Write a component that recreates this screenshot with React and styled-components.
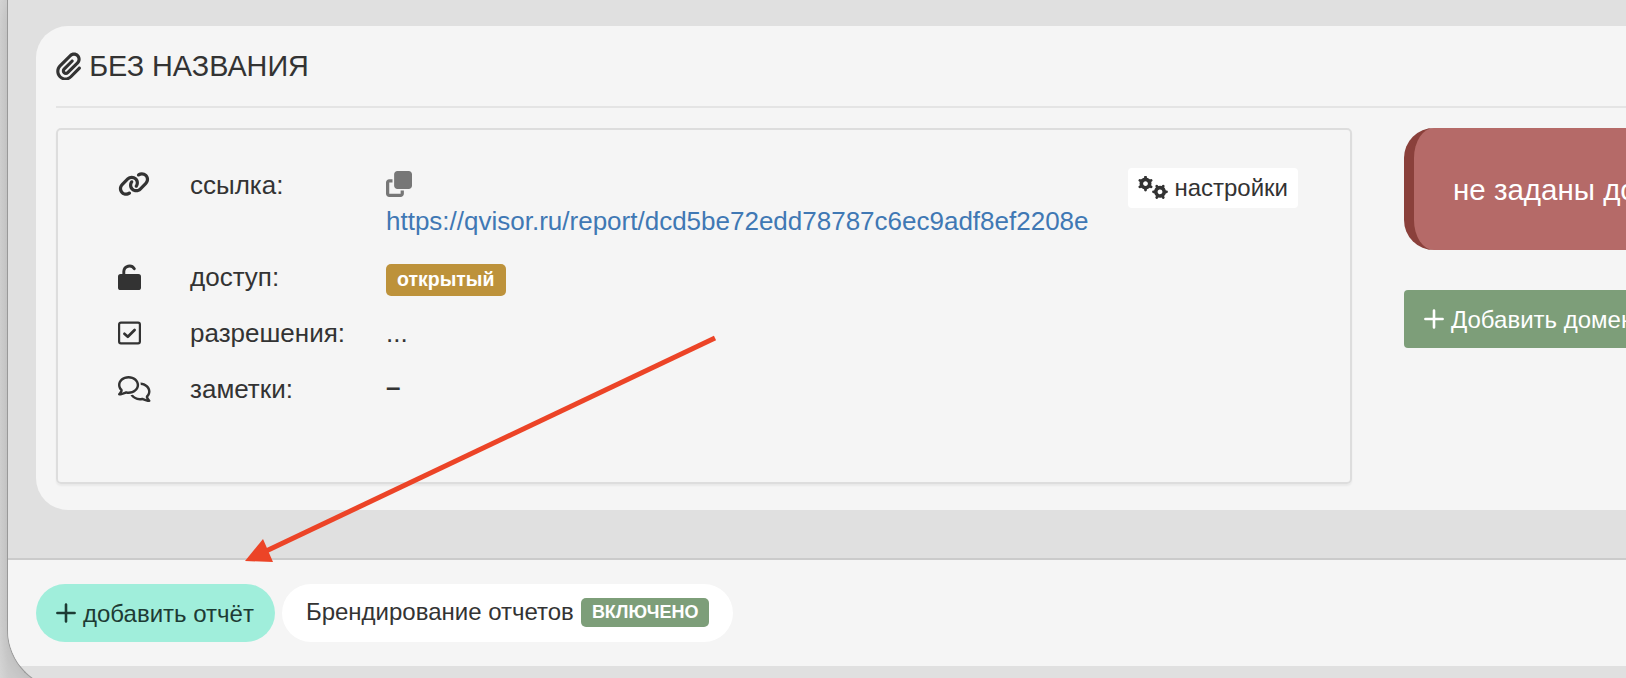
import React from "react";
import styled, { createGlobalStyle } from "styled-components";
import {
  FaPaperclip,
  FaLink,
  FaRegComments,
  FaClone,
} from "react-icons/fa6";

const GlobalStyle = createGlobalStyle`
  * {
    box-sizing: border-box;
  }

  body {
    margin: 0;
    overflow: hidden;
    font-family: "Liberation Sans", Arial, sans-serif;
    color: #333;
  }
`;

const Desktop = styled.div`
  height: 678px;
  padding-left: 7px;
  overflow: hidden;
  background: linear-gradient(to right, #d6d6d6, #cfcfcf 8px);
`;

const Window = styled.div`
  position: relative;
  display: flex;
  flex-direction: column;
  height: 690px;
  width: 1740px;
  border-left: 1px solid #999;
  border-bottom: 1px solid #999;
  border-bottom-left-radius: 60px;
  background: #e0e0e0;
  overflow: hidden;
  box-shadow: 0 4px 24px rgba(0, 0, 0, 0.12);
`;

const Content = styled.div`
  height: 558px;
  padding: 26px 0 0 28px;
`;

const Card = styled.section`
  height: 484px;
  padding: 20px;
  border-radius: 32px;
  background: #f5f5f5;
`;

/* the glyphs are not square, so the width is given next to the height */
const Icon = styled.span`
  display: inline-flex;
  flex-shrink: 0;

  svg {
    width: ${(props) => props.$w}px;
    height: ${(props) => props.$h}px;
  }
`;

const Title = styled.h1`
  display: flex;
  align-items: center;
  gap: 8px;
  height: 40px;
  margin: 0 0 20px;
  font-size: 28.8px;
  font-weight: normal;
  line-height: 40px;
`;

const Divider = styled.hr`
  height: 2px;
  margin: 0 0 20px;
  border: 0;
  background: #e4e4e4;
`;

const Columns = styled.div`
  display: flex;
  gap: 52px;
`;

const Panel = styled.div`
  display: flex;
  flex-shrink: 0;
  justify-content: space-between;
  align-items: flex-start;
  width: 1296px;
  height: 356px;
  padding: 36px 52px 0 60px;
  border: 2px solid #ddd;
  border-radius: 5px;
  box-shadow: 0 2px 2px rgba(0, 0, 0, 0.05);
`;

const Rows = styled.div`
  display: grid;
  grid-template-columns: 72px 196px auto;
  row-gap: 19px;
  font-size: 26px;
  line-height: 37px;
`;

const RowIcon = styled.div`
  display: flex;
  align-items: center;
  height: 35px;
`;

const RowLabel = styled.div`
  padding-top: ${(props) => (props.$first ? 1 : 0)}px;
`;

const Link = styled.a`
  display: block;
  color: #4078b4;
  text-decoration: none;
`;

const CopyIcon = styled(FaClone)`
  display: block;
  margin: 5px 0 6px;
  color: #777;
`;

const Dash = styled.span`
  position: relative;
  top: -2px;
  font-weight: bold;
`;

const Label = styled.span`
  display: inline-flex;
  align-items: center;
  height: ${(props) => props.$height}px;
  padding: 0 11px;
  border-radius: 5px;
  background: ${(props) => props.$bg};
  color: #fff;
  font-size: ${(props) => props.$size}px;
  font-weight: bold;
  line-height: 1;
`;

const SettingsButton = styled.button`
  display: flex;
  align-items: center;
  gap: 6px;
  height: 40px;
  margin-top: 2px;
  padding: 0 10px;
  border: 0;
  border-radius: 4px;
  background: #fff;
  color: #333;
  font: inherit;
  font-size: 24px;
`;

const Side = styled.div`
  flex: 1;
`;

const Alert = styled.div`
  height: 122px;
  margin-bottom: 40px;
  padding-left: 39px;
  border-left: 10px solid #8a403b;
  border-radius: 30px;
  background: #b56a68;
  color: #fff;
  font-size: 29.5px;
  line-height: 124px;
  white-space: nowrap;
`;

const Button = styled.button`
  display: flex;
  align-items: center;
  gap: 7px;
  height: 58px;
  padding: 0 21px 0 20px;
  border: 0;
  border-radius: ${(props) => (props.$round ? 29 : 4)}px;
  background: ${(props) => props.$bg};
  color: ${(props) => props.$color};
  font: inherit;
  font-size: 24px;
  line-height: 28px;
  white-space: nowrap;
`;

const ButtonText = styled.span`
  padding-top: 2px;
`;

const BrandingButton = styled(Button)`
  padding: 0 24px 2px;
`;

const Footer = styled.footer`
  display: flex;
  align-items: center;
  gap: 7px;
  height: 108px;
  padding-left: 28px;
  border-top: 2px solid #cbcbcb;
  background: #f5f5f5;
`;

const Arrow = styled.svg`
  position: absolute;
  top: 330px;
  left: 232px;
`;

const UnlockIcon = () => (
  <svg viewBox="0 0 23 26">
    <rect x="0" y="10" width="23" height="16" rx="2.6" fill="currentColor" />
    <path
      d="M5.8 11 V7.4 A5.7 5.7 0 0 1 16.3 4.7"
      fill="none"
      stroke="currentColor"
      strokeWidth="2.9"
      strokeLinecap="round"
    />
  </svg>
);

const CheckIcon = () => (
  <svg viewBox="0 0 23 26" fill="none" stroke="currentColor">
    <rect x="1.1" y="2.6" width="20.8" height="20.8" rx="1.8" strokeWidth="2.2" />
    <path
      d="M6.4 13.8 L9.8 16.8 L16.6 10"
      strokeWidth="2.7"
      strokeLinecap="round"
      strokeLinejoin="round"
    />
  </svg>
);

const PlusIcon = () => (
  <svg viewBox="0 0 20 20">
    <path
      d="M10 1.6 V18.4 M1.4 10 H18.6"
      stroke="currentColor"
      strokeWidth="2.6"
      strokeLinecap="round"
    />
  </svg>
);

const Gear = ({ x, y, turn }) => (
  <g transform={`translate(${x} ${y}) rotate(${turn})`} stroke="currentColor">
    <circle r="4.2" fill="none" strokeWidth="3.6" />
    {[0, 60, 120, 180, 240, 300].map((angle) => (
      <path
        key={angle}
        d="M0 -5.6 V-6.5"
        strokeWidth="2.8"
        strokeLinecap="round"
        transform={`rotate(${angle})`}
      />
    ))}
  </g>
);

const GearsIcon = () => (
  <svg viewBox="0 0 30 24">
    <Gear x={7.5} y={7.6} turn={0} />
    <Gear x={22} y={15.8} turn={30} />
  </svg>
);

const rows = [
  {
    icon: <FaLink />,
    width: 32,
    label: "ссылка:",
    value: (
      <>
        <CopyIcon size={26} />
        <Link href="#">
          https://qvisor.ru/report/dcd5be72edd78787c6ec9adf8ef2208e
        </Link>
      </>
    ),
  },
  {
    icon: <UnlockIcon />,
    width: 23,
    label: "доступ:",
    value: (
      <Label $bg="#bd923b" $size={19.5} $height={32}>
        открытый
      </Label>
    ),
  },
  {
    icon: <CheckIcon />,
    width: 23,
    label: "разрешения:",
    value: "...",
  },
  {
    icon: <FaRegComments />,
    width: 32.5,
    label: "заметки:",
    value: <Dash>–</Dash>,
  },
];

const App = () => {
  return (
    <Desktop>
      <GlobalStyle />
      <Window>
        <Content>
          <Card>
            <Title>
              <Icon $w={25.2} $h={28.8}>
                <FaPaperclip />
              </Icon>
              БЕЗ НАЗВАНИЯ
            </Title>
            <Divider />
            <Columns>
              <Panel>
                <Rows>
                  {rows.map((row, i) => (
                    <React.Fragment key={row.label}>
                      <RowIcon>
                        <Icon $w={row.width} $h={26}>
                          {row.icon}
                        </Icon>
                      </RowIcon>
                      <RowLabel $first={i === 0}>{row.label}</RowLabel>
                      <div>{row.value}</div>
                    </React.Fragment>
                  ))}
                </Rows>
                <SettingsButton>
                  <Icon $w={30} $h={24}>
                    <GearsIcon />
                  </Icon>
                  настройки
                </SettingsButton>
              </Panel>
              <Side>
                <Alert>не заданы домены</Alert>
                <Button $bg="#7d9e79" $color="#fff">
                  <Icon $w={20} $h={20}>
                    <PlusIcon />
                  </Icon>
                  <ButtonText>Добавить домен</ButtonText>
                </Button>
              </Side>
            </Columns>
          </Card>
        </Content>
        <Footer>
          <Button $bg="#a0eedb" $color="#1d3b34" $round>
            <Icon $w={20} $h={20}>
              <PlusIcon />
            </Icon>
            <ButtonText>добавить отчёт</ButtonText>
          </Button>
          <BrandingButton $bg="#fff" $color="#333" $round>
            Брендирование отчетов
            <Label $bg="#7d9e79" $size={18} $height={29}>
              ВКЛЮЧЕНО
            </Label>
          </BrandingButton>
        </Footer>
        <Arrow width="490" height="240" viewBox="0 0 490 240">
          <path d="M475 8 L24 222" stroke="#ec4427" strokeWidth="5" />
          <path d="M5 231 L23 209 L33 232 Z" fill="#ec4427" />
        </Arrow>
      </Window>
    </Desktop>
  );
};

export default App;
